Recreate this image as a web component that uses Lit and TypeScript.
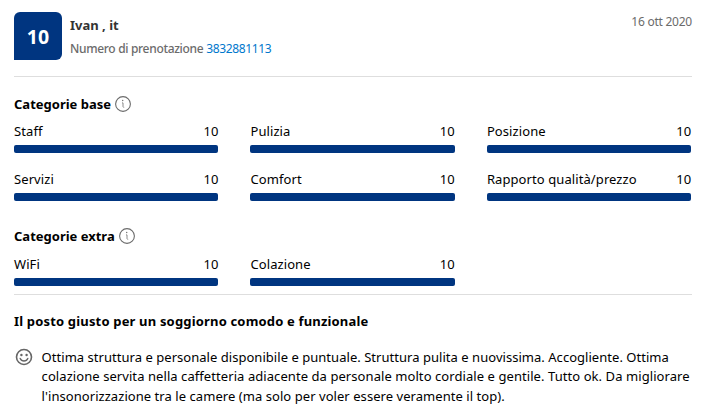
import { LitElement, html, css } from "lit";
import { customElement, property } from "lit/decorators.js";

@customElement("info-icon")
class InfoIcon extends LitElement {
  static styles = css`
    :host { display: block; width: 16px; height: 16px; }
    svg { display: block; }
  `;
  render() {
    return html`<svg width="16" height="16" viewBox="0 0 16 16" fill="none" stroke="#6b6b6b">
      <circle cx="8" cy="8" r="7.4" stroke-width="1.1" />
      <path d="M7 6.9h1v3.6c0 .6.3.8 1.2.8" stroke-width="1" stroke="#8a8a8a" />
      <circle cx="7.7" cy="4.6" r=".75" fill="#777" stroke="none" />
    </svg>`;
  }
}

@customElement("score-bar")
class ScoreBar extends LitElement {
  @property() label = "";
  @property({ type: Number }) score = 0;
  static styles = css`
    :host { display: flex; flex-direction: column; gap: 4px; min-width: 0; }
    .row { display: flex; justify-content: space-between; height: 20px; line-height: 20px; white-space: nowrap; letter-spacing: 0.09px; }
    .track { height: 8px; border-radius: 2px; background: #e6e6e6; overflow: hidden; }
    .fill { height: 8px; background: #003580; }
  `;
  render() {
    return html`<div class="row"><span>${this.label}</span><span>${this.score}</span></div>
      <div class="track"><div class="fill" style="width:${this.score * 10}%"></div></div>`;
  }
}

@customElement("app-root")
class AppRoot extends LitElement {
  static styles = css`
    :host {
      display: block; box-sizing: border-box; width: 707px; height: 406px; overflow: hidden;
      padding: 12px 15px 0 14px; background: #fff; color: #000;
      font: 13px/20px "Noto Sans", "Open Sans", sans-serif;
    }
    header { display: flex; height: 64px; border-bottom: 1px solid #dedede; }
    .badge {
      width: 48px; height: 48px; border-radius: 6px 6px 6px 0; background: #003580; color: #fff;
      font-size: 19.5px; font-weight: 700; line-height: 50px; text-align: center;
    }
    .who { flex: 1; padding: 3px 0 0 8px; }
    .name { font-weight: 700; color: #333; }
    .booking { font-size: 12px; line-height: 20px; margin-top: 4px; color: #6b6b6b; font-weight: 500; letter-spacing: -0.32px; }
    .number { color: #0077cc; font-weight: 400; letter-spacing: -0.36px; }
    .date { font-size: 12px; color: #6b6b6b; letter-spacing: -0.24px; }
    h2, h3 { margin: 0; font-size: 13px; line-height: 20px; font-weight: 700; }
    h2 { display: flex; align-items: center; gap: 4px; margin-bottom: 7px; }
    .base { padding-top: 17px; }
    .extra { padding: 25px 0 8px; border-bottom: 1px solid #dedede; }
    .extra h2 { margin-bottom: 8px; }
    .grid { display: grid; grid-template-columns: repeat(3, 1fr); gap: 16px 32px; margin-right: 0.7px; }
    h3 { margin-top: 16px; letter-spacing: 0.17px; }
    .review { display: flex; gap: 8px; padding: 16px 0 0 1px; }
    .smile { flex: none; width: 19px; height: 20px; }
    .text { line-height: 19.6px; margin-left: -0.4px; padding-top: 0.7px; }
    .text div { white-space: nowrap; }
    .text div:nth-child(1) { letter-spacing: 0.035px; }
    .text div:nth-child(2) { letter-spacing: 0.07px; }
    .text div:nth-child(3) { letter-spacing: 0.055px; }
  `;
  base = ["Staff", "Pulizia", "Posizione", "Servizi", "Comfort", "Rapporto qualità/prezzo"];
  extra = ["WiFi", "Colazione"];
  lines = [
    "Ottima struttura e personale disponibile e puntuale. Struttura pulita e nuovissima. Accogliente. Ottima",
    "colazione servita nella caffetteria adiacente da personale molto cordiale e gentile. Tutto ok. Da migliorare",
    "l'insonorizzazione tra le camere (ma solo per voler essere veramente il top).",
  ];
  bars(labels: string[]) {
    return html`<div class="grid">${labels.map((l) => html`<score-bar .label=${l} .score=${10}></score-bar>`)}</div>`;
  }
  render() {
    return html`
      <header>
        <div class="badge">10</div>
        <div class="who">
          <div class="name">Ivan , it</div>
          <div class="booking"><span class="caption">Numero di prenotazione</span> <span class="number">3832881113</span></div>
        </div>
        <div class="date">16 ott 2020</div>
      </header>
      <section class="base"><h2><span>Categorie base</span><info-icon></info-icon></h2>${this.bars(this.base)}</section>
      <section class="extra"><h2><span>Categorie extra</span><info-icon></info-icon></h2>${this.bars(this.extra)}</section>
      <h3><span>Il posto giusto per un soggiorno comodo e funzionale</span></h3>
      <div class="review">
        <svg class="smile" viewBox="0 0 19 20" fill="none" stroke="#666" stroke-width="1.6">
          <circle cx="9" cy="10" r="7.5" />
          <circle cx="6.4" cy="8" r="1.2" fill="#666" stroke="none" />
          <circle cx="11.6" cy="8" r="1.2" fill="#666" stroke="none" />
          <path d="M5.2 11.500c.7 1.700 2.100 2.500 3.800 2.500s3.100-.8 3.800-2.500" stroke-width="1.4" stroke-linecap="round" />
        </svg>
        <div class="text">${this.lines.map((l) => html`<div>${l}</div>`)}</div>
      </div>`;
  }
}
